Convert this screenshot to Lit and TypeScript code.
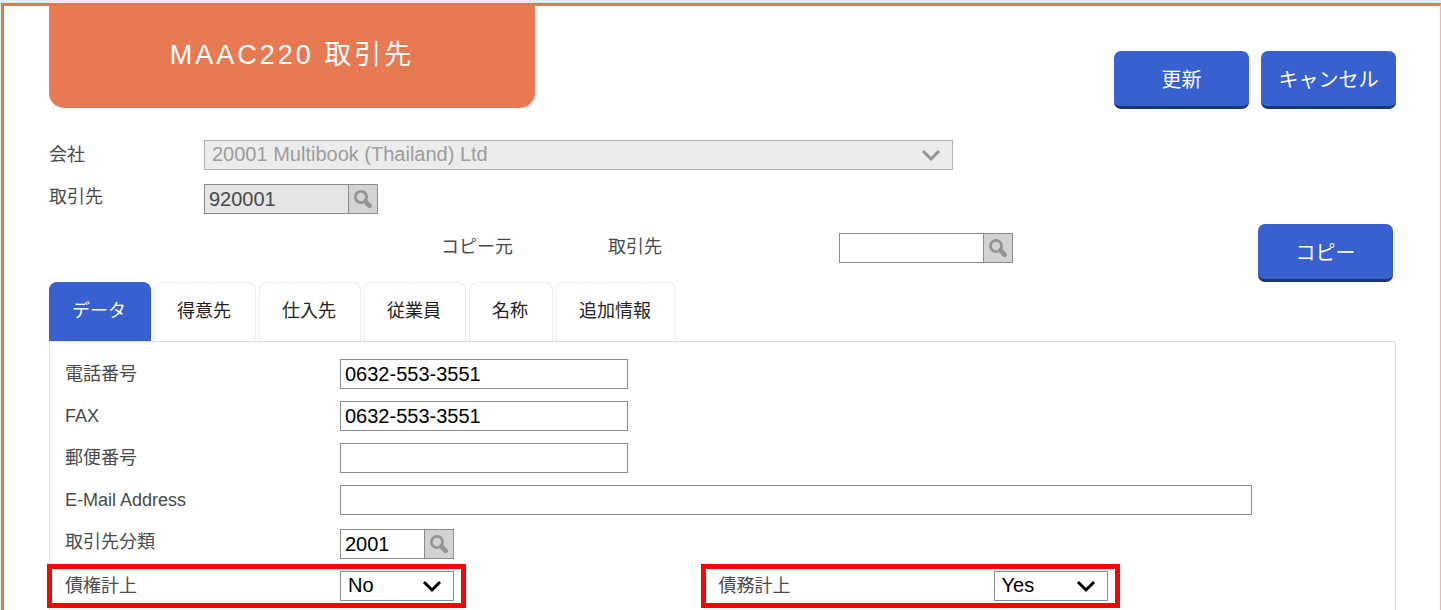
import { LitElement, html, css } from "lit";
import { customElement, property, state } from "lit/decorators.js";
import { classMap } from "lit/directives/class-map.js";

const base = css`
  :host {
    display: block;
    font-family: "Liberation Sans", "Noto Sans CJK JP", sans-serif;
    font-size: 18px;
    line-height: 30px;
    color: #4a4a4a;
  }
  *,
  *::before,
  *::after {
    box-sizing: border-box;
  }
  input,
  select,
  button {
    margin: 0;
    font-family: inherit;
  }
`;

/** Code field with a search button at its right end. */
@customElement("lookup-field")
export class LookupField extends LitElement {
  static styles = [
    base,
    css`
      :host {
        padding-top: 2px;
      }
      .box {
        display: flex;
        width: fit-content;
        height: 30px;
        border: 1px solid #8c8c8c;
        background: #fff;
      }
      .box.disabled {
        background: #e5e5e5;
      }
      .code {
        width: 143px;
        padding: 0 4px;
        border: 0;
        background: transparent;
        font-size: 20px;
        color: #000;
      }
      .code.short {
        width: 83px;
      }
      .code:disabled {
        color: #4a4a4a;
      }
      .search {
        display: flex;
        align-items: center;
        justify-content: center;
        width: 29px;
        padding: 0;
        border: 0;
        border-left: 1px solid #8c8c8c;
        background: #d3d3d3;
      }
    `,
  ];
  @property() label = "";
  @property() value = "";
  @property({ type: Boolean }) short = false;
  @property({ type: Boolean }) disabled = false;

  render() {
    return html`<div class=${classMap({ box: true, disabled: this.disabled })}>
      <input
        class=${classMap({ code: true, short: this.short })}
        type="text"
        aria-label=${this.label}
        .value=${this.value}
        ?disabled=${this.disabled}
      />
      <button class="search" type="button" aria-label="検索" ?disabled=${this.disabled}>
        <svg width="20" height="20" viewBox="0 0 20 20" fill="none" stroke="#949494">
          <circle cx="8" cy="8" r="5.6" stroke-width="2.8" />
          <path d="M12.4 12.4 16.6 16.8" stroke-width="4.6" stroke-linecap="round" />
        </svg>
      </button>
    </div>`;
  }
}

/** Drop-down with a chevron. */
@customElement("choice-field")
export class ChoiceField extends LitElement {
  static styles = [
    base,
    css`
      .wrap {
        position: relative;
      }
      .list {
        display: block;
        width: 100%;
        height: 30px;
        padding: 0 36px 2px 7px;
        border: 1px solid #8c8c8c;
        border-radius: 0;
        background: #fff;
        font-size: 20px;
        color: #000;
        appearance: none;
      }
      .list:disabled {
        border-color: #b3b3b3;
        background: #ececec;
        color: #9c9c9c;
        opacity: 1;
      }
      .arrow {
        position: absolute;
        top: 8px;
        right: 12px;
        color: #000;
        pointer-events: none;
      }
      .list:disabled + .arrow {
        color: #949494;
      }
    `,
  ];
  @property() label = "";
  @property() value = "";
  @property({ attribute: false }) options: string[] = [];
  @property({ type: Boolean }) disabled = false;

  render() {
    return html`<div class="wrap">
      <select class="list" aria-label=${this.label} ?disabled=${this.disabled}>
        ${this.options.map((o) => html`<option ?selected=${o === this.value}>${o}</option>`)}
      </select>
      <svg class="arrow" width="20" height="14" viewBox="0 0 20 14" fill="none" stroke="currentColor" stroke-width="3">
        <path d="M2 3 10 11 18 3" />
      </svg>
    </div>`;
  }
}

@customElement("app-root")
export class AppRoot extends LitElement {
  static styles = [
    base,
    css`
      .page {
        display: flex;
        flex-direction: column;
        min-height: 100vh;
        padding: 3px 0 0 1px;
        background: #e3edf5;
      }
      .frame {
        flex: 1;
        display: flex;
        flex-direction: column;
        padding: 0 44px 0 45px;
        border: solid #ea7350;
        border-width: 3px 1px 0 3px;
        border-right-color: #f3b8a2;
        background: #fff;
      }
      .head {
        display: flex;
        justify-content: space-between;
        align-items: flex-start;
      }
      .title {
        width: 486px;
        margin: 0;
        padding: 32px 0 36px;
        border-radius: 0 0 15px 15px;
        background: #e87a53;
        color: #fff;
        font-size: 27px;
        font-weight: 400;
        line-height: 34px;
        letter-spacing: 3px;
        text-align: center;
      }
      .actions {
        display: flex;
        gap: 12px;
        padding-top: 45px;
      }
      .btn {
        width: 135px;
        height: 58px;
        padding: 0;
        border: 0;
        border-bottom: 3px solid #17386f;
        border-radius: 7px;
        background: #3860cf;
        color: #fff;
        font-size: 20px;
      }
      .keys {
        display: grid;
        grid-template-columns: 155px minmax(0, 749px);
        row-gap: 12px;
        margin-top: 31px;
      }
      .copy {
        display: grid;
        grid-template-columns: 167px 231px 1fr auto;
        padding: 10px 3px 0 392px;
      }
      .copy > :not(.btn) {
        margin-top: 7px;
      }
      .copy .label {
        padding-top: 1px;
      }
      .tabs {
        display: flex;
        gap: 3px;
      }
      .tab {
        height: 59px;
        padding: 0 24px 6px 22px;
        border: 1px solid #ececec;
        border-bottom: 0;
        border-radius: 8px 8px 0 0;
        background: #fff;
        color: #222;
        font-size: 18px;
      }
      .tab.active {
        border-color: #3860cf;
        background: #3860cf;
        color: #fff;
      }
      .panel {
        flex: 1;
        display: flex;
        flex-direction: column;
        gap: 12px;
        padding: 17px 23px 9px 15px;
        border: 1px solid #dedede;
        border-bottom: 0;
      }
      .row {
        display: grid;
        grid-template-columns: 275px minmax(0, 1fr);
      }
      .text {
        width: 288px;
        height: 30px;
        padding: 0 4px;
        border: 1px solid #8c8c8c;
        font-size: 20px;
        color: #000;
      }
      .text.wide {
        width: 100%;
        max-width: 912px;
      }
      .pair {
        display: grid;
        grid-template-columns: 1fr 1fr;
      }
      .marked {
        position: relative;
        display: grid;
        grid-template-columns: 275px 114px;
        justify-self: start;
      }
      .marked::after {
        content: "";
        position: absolute;
        inset: -7px -12px -7px -18px;
        border: 5px solid #f00;
        pointer-events: none;
      }
    `,
  ];

  @state() private active = 0;
  private tabs = ["データ", "得意先", "仕入先", "従業員", "名称", "追加情報"];
  private fields = [
    { id: "tel", label: "電話番号", value: "0632-553-3551", wide: false },
    { id: "fax", label: "FAX", value: "0632-553-3551", wide: false },
    { id: "zip", label: "郵便番号", value: "", wide: false },
    { id: "mail", label: "E-Mail Address", value: "", wide: true },
  ];
  private flags = [
    { label: "債権計上", value: "No" },
    { label: "債務計上", value: "Yes" },
  ];

  render() {
    return html`<div class="page">
      <main class="frame">
        <header class="head">
          <h1 class="title">MAAC220 取引先</h1>
          <div class="actions">
            <button class="btn" type="button">更新</button>
            <button class="btn" type="button">キャンセル</button>
          </div>
        </header>
        <section class="keys">
          <span class="label">会社</span>
          <choice-field
            label="会社"
            value="20001 Multibook (Thailand) Ltd"
            .options=${["20001 Multibook (Thailand) Ltd"]}
            disabled
          ></choice-field>
          <span class="label">取引先</span>
          <lookup-field label="取引先" value="920001" disabled></lookup-field>
        </section>
        <section class="copy">
          <span class="label">コピー元</span>
          <span class="label">取引先</span>
          <lookup-field label="コピー元 取引先"></lookup-field>
          <button class="btn" type="button">コピー</button>
        </section>
        <nav class="tabs" role="tablist">
          ${this.tabs.map(
            (t, i) => html`<button
              class=${classMap({ tab: true, active: i === this.active })}
              type="button"
              role="tab"
              aria-selected=${i === this.active}
              @click=${() => (this.active = i)}
            >${t}</button>`,
          )}
        </nav>
        <section class="panel">
          ${this.fields.map(
            (f) => html`<div class="row">
              <label for=${f.id}>${f.label}</label>
              <input id=${f.id} class=${classMap({ text: true, wide: f.wide })} type="text" .value=${f.value} />
            </div>`,
          )}
          <div class="row">
            <span>取引先分類</span>
            <lookup-field label="取引先分類" value="2001" short></lookup-field>
          </div>
          <div class="pair">
            ${this.flags.map(
              (f) => html`<div class="marked">
                <span>${f.label}</span>
                <choice-field label=${f.label} value=${f.value} .options=${["Yes", "No"]}></choice-field>
              </div>`,
            )}
          </div>
        </section>
      </main>
    </div>`;
  }
}
